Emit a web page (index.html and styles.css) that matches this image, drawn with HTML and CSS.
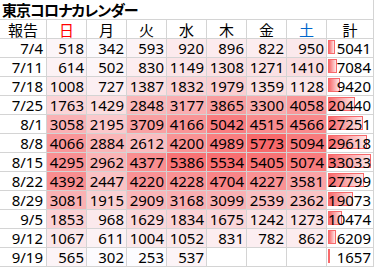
FILE: index.html
```html
<!DOCTYPE html>
<html lang="ja">
<head>
<meta charset="utf-8">
<title>東京コロナカレンダー</title>
<link rel="stylesheet" href="styles.css">
</head>
<body>
<div class="sheet">
  <div class="title">東京コロナカレンダー</div>
  <div class="hd">報告</div><div class="hd sun">日</div><div class="hd">月</div><div class="hd">火</div><div class="hd">水</div><div class="hd">木</div><div class="hd">金</div><div class="hd sat">土</div><div class="hd">計</div>

  <div class="dt">7/4</div><div class="c" style="--v:518">518</div><div class="c" style="--v:342">342</div><div class="c" style="--v:593">593</div><div class="c" style="--v:920">920</div><div class="c" style="--v:896">896</div><div class="c" style="--v:822">822</div><div class="c" style="--v:950">950</div><div class="tot"><span class="bar" style="--v:5041"></span><span class="num">5041</span></div>

  <div class="dt">7/11</div><div class="c" style="--v:614">614</div><div class="c" style="--v:502">502</div><div class="c" style="--v:830">830</div><div class="c" style="--v:1149">1149</div><div class="c" style="--v:1308">1308</div><div class="c" style="--v:1271">1271</div><div class="c" style="--v:1410">1410</div><div class="tot"><span class="bar" style="--v:7084"></span><span class="num">7084</span></div>

  <div class="dt">7/18</div><div class="c" style="--v:1008">1008</div><div class="c" style="--v:727">727</div><div class="c" style="--v:1387">1387</div><div class="c" style="--v:1832">1832</div><div class="c" style="--v:1979">1979</div><div class="c" style="--v:1359">1359</div><div class="c" style="--v:1128">1128</div><div class="tot"><span class="bar" style="--v:9420"></span><span class="num">9420</span></div>

  <div class="dt">7/25</div><div class="c" style="--v:1763">1763</div><div class="c" style="--v:1429">1429</div><div class="c" style="--v:2848">2848</div><div class="c" style="--v:3177">3177</div><div class="c" style="--v:3865">3865</div><div class="c" style="--v:3300">3300</div><div class="c" style="--v:4058">4058</div><div class="tot"><span class="bar" style="--v:20440"></span><span class="num">20440</span></div>

  <div class="dt">8/1</div><div class="c" style="--v:3058">3058</div><div class="c" style="--v:2195">2195</div><div class="c" style="--v:3709">3709</div><div class="c" style="--v:4166">4166</div><div class="c" style="--v:5042">5042</div><div class="c" style="--v:4515">4515</div><div class="c" style="--v:4566">4566</div><div class="tot"><span class="bar" style="--v:27251"></span><span class="num">27251</span></div>

  <div class="dt">8/8</div><div class="c" style="--v:4066">4066</div><div class="c" style="--v:2884">2884</div><div class="c" style="--v:2612">2612</div><div class="c" style="--v:4200">4200</div><div class="c" style="--v:4989">4989</div><div class="c" style="--v:5773">5773</div><div class="c" style="--v:5094">5094</div><div class="tot"><span class="bar" style="--v:29618"></span><span class="num">29618</span></div>

  <div class="dt">8/15</div><div class="c" style="--v:4295">4295</div><div class="c" style="--v:2962">2962</div><div class="c" style="--v:4377">4377</div><div class="c" style="--v:5386">5386</div><div class="c" style="--v:5534">5534</div><div class="c" style="--v:5405">5405</div><div class="c" style="--v:5074">5074</div><div class="tot"><span class="bar" style="--v:33033"></span><span class="num">33033</span></div>

  <div class="dt">8/22</div><div class="c" style="--v:4392">4392</div><div class="c" style="--v:2447">2447</div><div class="c" style="--v:4220">4220</div><div class="c" style="--v:4228">4228</div><div class="c" style="--v:4704">4704</div><div class="c" style="--v:4227">4227</div><div class="c" style="--v:3581">3581</div><div class="tot"><span class="bar" style="--v:27799"></span><span class="num">27799</span></div>

  <div class="dt">8/29</div><div class="c" style="--v:3081">3081</div><div class="c" style="--v:1915">1915</div><div class="c" style="--v:2909">2909</div><div class="c" style="--v:3168">3168</div><div class="c" style="--v:3099">3099</div><div class="c" style="--v:2539">2539</div><div class="c" style="--v:2362">2362</div><div class="tot"><span class="bar" style="--v:19073"></span><span class="num">19073</span></div>

  <div class="dt">9/5</div><div class="c" style="--v:1853">1853</div><div class="c" style="--v:968">968</div><div class="c" style="--v:1629">1629</div><div class="c" style="--v:1834">1834</div><div class="c" style="--v:1675">1675</div><div class="c" style="--v:1242">1242</div><div class="c" style="--v:1273">1273</div><div class="tot"><span class="bar" style="--v:10474"></span><span class="num">10474</span></div>

  <div class="dt">9/12</div><div class="c" style="--v:1067">1067</div><div class="c" style="--v:611">611</div><div class="c" style="--v:1004">1004</div><div class="c" style="--v:1052">1052</div><div class="c" style="--v:831">831</div><div class="c" style="--v:782">782</div><div class="c" style="--v:862">862</div><div class="tot"><span class="bar" style="--v:6209"></span><span class="num">6209</span></div>

  <div class="dt">9/19</div><div class="c" style="--v:565">565</div><div class="c" style="--v:302">302</div><div class="c" style="--v:253">253</div><div class="c" style="--v:537">537</div><div class="e"></div><div class="e"></div><div class="e"></div><div class="tot"><span class="bar" style="--v:1657"></span><span class="num">1657</span></div>
</div>
</body>
</html>
```

FILE: styles.css
```css
html, body {
  margin: 0;
  padding: 0;
  background: #ffffff;
}

.sheet {
  display: grid;
  grid-template-columns: 46px repeat(7, 39px) 46px;
  grid-template-rows: 19px;
  grid-auto-rows: 18px;
  gap: 1px;
  padding: 0 1px 1px 0;
  width: 373px;
  background: #d4d4d4;
  font-family: "Noto Sans", "Noto Sans CJK JP", sans-serif;
  font-size: 15px;
  line-height: 18px;
  color: #000;
}

.sheet > div {
  background: #fff;
  white-space: nowrap;
}

.title {
  grid-column: 1 / -1;
  display: flex;
  align-items: center;
  font-family: "Noto Sans CJK JP", sans-serif;
  font-weight: bold;
  font-size: 15px;
  line-height: 15px;
  padding-left: 2px;
  font-feature-settings: "palt";
  letter-spacing: -0.9px;
}

.hd {
  display: flex;
  align-items: center;
  justify-content: center;
  font-family: "Noto Sans CJK JP", sans-serif;
  font-size: 15px;
  line-height: 15px;
}

.hd.sun { color: #ff0000; }
.hd.sat { color: #0066cc; }

.dt {
  text-align: right;
  padding-right: 3px;
}

.c {
  text-align: right;
  padding-right: 2px;
  --t: calc((var(--v) - 253) / 5520);
}

.sheet > .c {
  background: rgb(calc(252 - 4 * var(--t)) calc(252 - 147 * var(--t)) calc(255 - 148 * var(--t)));
}

.tot {
  position: relative;
  text-align: right;
  padding-right: 2px;
}

.bar {
  position: absolute;
  left: 1px;
  top: 1px;
  height: 14px;
  width: calc(var(--v) / 33033 * 43px);
  box-sizing: border-box;
  border: 1px solid #f8696b;
  background: linear-gradient(to right, #f8696b, #fde8e9);
}

.num {
  position: relative;
}
```
